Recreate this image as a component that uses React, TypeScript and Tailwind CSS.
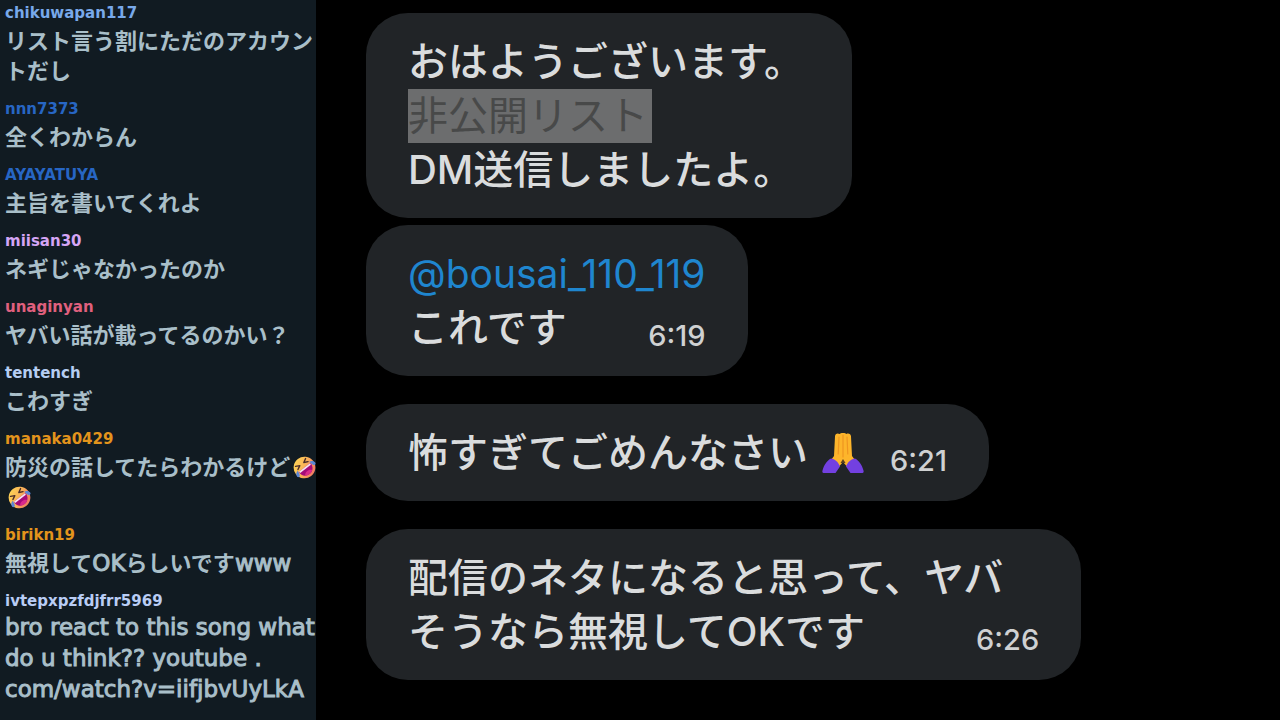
import type { ReactNode } from "react";

function LaughingFace() {
  return (
    <svg viewBox="0 0 36 36" className="ml-[3px] inline-block size-[23px] align-[-4px]" role="img" aria-label="🤣">
      <defs>
        <linearGradient id="face" x1="0" y1="0" x2="0.6" y2="1">
          <stop offset="0" stopColor="#ffdc55" />
          <stop offset="0.55" stopColor="#f9b458" />
          <stop offset="1" stopColor="#f07b62" />
        </linearGradient>
      </defs>
      <g transform="rotate(-38 18 18)">
        <circle cx="18" cy="18" r="17" fill="url(#face)" />
        <path d="M8 8l6 3.200-6 3M28 8l-6 3.200 6 3" fill="none" stroke="#4b2d28" strokeWidth="2.200" strokeLinecap="round" strokeLinejoin="round" />
        <path d="M6.500 18h23c.8 7.500-4.500 13-11.500 13s-12.300-5.500-11.500-13z" fill="#a50a78" />
        <path d="M7 18h22l-.4 2.600H7.400z" fill="#f6e4f2" />
        <path d="M11 28.500c3-4.500 11-4.500 14 0-3.500 3.500-10.500 3.500-14 0z" fill="#d92a8c" />
        <path d="M6.500 15.500C3 16-.3 19 0 22.500c.4 2.600 3.700 2.800 4.800.4.900-1.800 1.200-4.700 1.700-7.400zM29.500 15.500c3.500.5 6.800 3.500 6.500 7-.4 2.600-3.700 2.800-4.800.4-.9-1.800-1.200-4.700-1.700-7.400z" fill="#5b86d6" />
      </g>
    </svg>
  );
}

function FoldedHands() {
  return (
    <svg viewBox="0 0 42 42" className="ml-[14px] inline-block size-[42px] align-[-7px]" role="img" aria-label="🙏">
      <path d="M13 4.500C13 1.500 15.800.8 17.500 2c.8-1.500 6.200-1.500 7 0 1.700-1.200 4.500 0 4.500 2.500l1 19.500 4.500 6-6.500 8-7-8-7 8-6.500-8 4.500-6z" fill="#fdb52b" />
      <path d="M21 3v22M17 5l-.8 17M25 5l.8 17" fill="none" stroke="#ef9620" strokeWidth="1.200" strokeLinecap="round" />
      <path d="M21 27l-2.500 4h5z" fill="#5a4020" />
      <path d="M9 26.500c3.500.3 7.500 3.500 9 8L13.500 41H1.500C.6 41 0 40 .5 38.500 2 33 5 28.500 9 26.500z" fill="#7340e0" />
      <path d="M33 26.500c-3.500.3-7.500 3.500-9 8l4.500 6.500h12c.9 0 1.500-1 1-2.500-1.500-5.500-4.500-10-8.500-12z" fill="#7340e0" />
    </svg>
  );
}

function Latin({ children }: { children: ReactNode }) {
  return (
    <span className="font-['DejaVu_Sans'] text-[23px] leading-none font-normal [-webkit-text-stroke:1px_currentColor]">{children}</span>
  );
}

type Chat = { name: string; color: string; lines: ReactNode[]; latin?: boolean };

const chats: Chat[] = [
  { name: "chikuwapan117", color: "text-[#78a9ea]", lines: ["リスト言う割にただのアカウン", "トだし"] },
  { name: "nnn7373", color: "text-[#2766c4]", lines: ["全くわからん"] },
  { name: "AYAYATUYA", color: "text-[#2766c4]", lines: ["主旨を書いてくれよ"] },
  { name: "miisan30", color: "text-[#d5a5f5]", lines: ["ネギじゃなかったのか"] },
  { name: "unaginyan", color: "text-[#e0607e]", lines: ["ヤバい話が載ってるのかい？"] },
  { name: "tentench", color: "text-[#b5cdf2]", lines: ["こわすぎ"] },
  {
    name: "manaka0429",
    color: "text-[#e3941c]",
    lines: [<>防災の話してたらわかるけど<LaughingFace /></>, <LaughingFace />],
  },
  {
    name: "birikn19",
    color: "text-[#e3941c]",
    lines: [<>無視して<Latin>OK</Latin>らしいです<Latin>www</Latin></>],
  },
  {
    name: "ivtepxpzfdjfrr5969",
    color: "text-[#b9cdf5]",
    latin: true,
    lines: ["bro react to this song what", "do u think?? youtube .", "com/watch?v=iifjbvUyLkA"],
  },
];

function Bubble({ children }: { children: ReactNode }) {
  return (
    <article className="w-fit rounded-[42px] bg-[#212427] px-[42px] pt-[22px] pb-[21px] font-['Inter','Noto_Sans_CJK_JP',sans-serif] text-[40px] leading-[54px] font-medium whitespace-nowrap text-[#dadcdd]">
      {children}
    </article>
  );
}

function Time({ children }: { children: string }) {
  return <time className="pb-1 text-[29px] leading-[30px] text-[#cfd1d2]">{children}</time>;
}

export default function App() {
  return (
    <div className="flex min-h-screen bg-black font-['Noto_Sans_CJK_JP',sans-serif]">
      <aside className="w-[316px] shrink-0 overflow-hidden bg-[#111b22] pt-[3px] pl-[5px]">
        <ul className="flex flex-col gap-[15px]">
          {chats.map((chat) => (
            <li key={chat.name} className="whitespace-nowrap">
              <h2 className={`font-['DejaVu_Sans'] text-[15px] leading-[21px] font-bold ${chat.color}`}>
                {chat.name}
              </h2>
              <div
                className={
                  chat.latin
                    ? "font-['DejaVu_Sans'] text-[23px] leading-[31px] text-[#a9bfc9] [-webkit-text-stroke:1px_currentColor]"
                    : "text-[22px] leading-[30px] font-bold text-[#a9bfc9]"
                }
              >
                {chat.lines.map((line, i) => (
                  <p key={i}>{line}</p>
                ))}
              </div>
            </li>
          ))}
        </ul>
      </aside>

      <main className="flex min-w-0 flex-1 flex-col pt-[13px] pl-[50px]">
        <Bubble>
          <p className="pr-[6px]">おはようございます。</p>
          <p className="w-fit bg-[#6c6d6e] pr-1 font-normal text-[#484949]">非公開リスト</p>
          <p>DM送信しましたよ。</p>
        </Bubble>
        <div className="mt-[7px]">
          <Bubble>
            <a href="#bousai_110_119" className="block text-[39px] font-normal text-[#1f86cf]">@bousai_110_119</a>
            <div className="flex items-end justify-between">
              <p>これです</p>
              <Time>6:19</Time>
            </div>
          </Bubble>
        </div>
        <div className="mt-7">
          <Bubble>
            <div className="flex items-end gap-[26px]">
              <p>怖すぎてごめんなさい<FoldedHands /></p>
              <Time>6:21</Time>
            </div>
          </Bubble>
        </div>
        <div className="mt-7">
          <Bubble>
            <p className="pr-9">配信のネタになると思って、ヤバ</p>
            <div className="flex items-end justify-between">
              <p>そうなら無視してOKです</p>
              <Time>6:26</Time>
            </div>
          </Bubble>
        </div>
      </main>
    </div>
  );
}
